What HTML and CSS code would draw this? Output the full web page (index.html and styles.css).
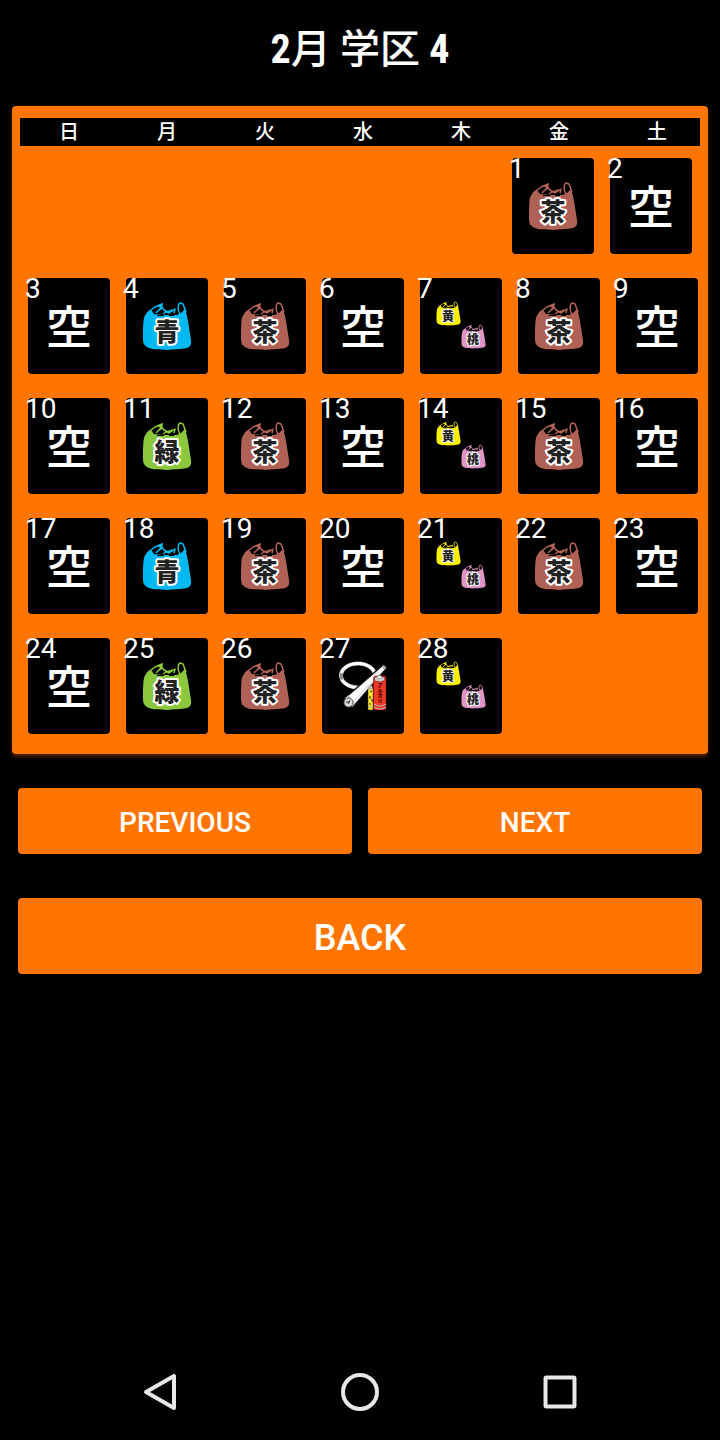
FILE: index.html
```html
<!DOCTYPE html>
<html lang="ja">
<head>
<meta charset="utf-8">
<meta name="viewport" content="width=device-width, initial-scale=1">
<title>2月 学区 4</title>
<link rel="stylesheet" href="styles.css">
</head>
<body>
<svg class="defs" aria-hidden="true">
  <symbol id="bag" viewBox="0 0 50 50">
    <path fill="currentColor" d="M1 38C1 30 1 22 2 17C3 13 6 10 9 9L12 13L22 14L35 14L39 12L43 8L44 11L46 20L49 39C50 45 47 47 42 47.500C37 48.500 31 48 25 49C18 48 11 49 7 47C2 45 1 42 1 38Z"/>
    <path fill="none" stroke="currentColor" stroke-width="1.500" stroke-linejoin="round" d="M5 12L13 6L20 3L18 8L14 12M19 5L22 9L27 12L33 8L32 12M21 13L24 11L31 9M38 13C35 9 36 3 38 2L41 3L44 11"/>
    <path fill="currentColor" d="M15 6L21 2L20 8L17 10L18 6Z"/>
    <path fill="none" stroke="#000" d="M15 14.500H22M27 14.500H32"/>
  </symbol>
</svg>
<header class="title-bar"><h1>2<span class="kanji">月 学区</span> 4</h1></header>
<main>
  <table class="calendar">
    <thead>
      <tr><th>日</th><th>月</th><th>火</th><th>水</th><th>木</th><th>金</th><th>土</th></tr>
    </thead>
    <tbody>
      <tr>
        <td class="blank"></td><td class="blank"></td><td class="blank"></td><td class="blank"></td><td class="blank"></td>
        <td><button class="day"><span class="num">1</span><svg class="icon brown" viewBox="0 0 50 50"><use href="#bag"/><text x="25" y="40">茶</text></svg></button></td>
        <td><button class="day"><span class="num">2</span><span class="none">空</span></button></td>
      </tr>
      <tr>
        <td><button class="day"><span class="num">3</span><span class="none">空</span></button></td>
        <td><button class="day"><span class="num">4</span><svg class="icon blue" viewBox="0 0 50 50"><use href="#bag"/><text x="25" y="40">青</text></svg></button></td>
        <td><button class="day"><span class="num">5</span><svg class="icon brown" viewBox="0 0 50 50"><use href="#bag"/><text x="25" y="40">茶</text></svg></button></td>
        <td><button class="day"><span class="num">6</span><span class="none">空</span></button></td>
        <td><button class="day"><span class="num">7</span><svg class="icon pair" viewBox="0 0 50 50"><use class="yellow" href="#bag" width="25" height="25"/><use class="pink" href="#bag" x="25" y="23" width="25" height="25"/><text x="12" y="20">黄</text><text x="37" y="43">桃</text></svg></button></td>
        <td><button class="day"><span class="num">8</span><svg class="icon brown" viewBox="0 0 50 50"><use href="#bag"/><text x="25" y="40">茶</text></svg></button></td>
        <td><button class="day"><span class="num">9</span><span class="none">空</span></button></td>
      </tr>
      <tr>
        <td><button class="day"><span class="num">10</span><span class="none">空</span></button></td>
        <td><button class="day"><span class="num">11</span><svg class="icon green" viewBox="0 0 50 50"><use href="#bag"/><text x="25" y="40">緑</text></svg></button></td>
        <td><button class="day"><span class="num">12</span><svg class="icon brown" viewBox="0 0 50 50"><use href="#bag"/><text x="25" y="40">茶</text></svg></button></td>
        <td><button class="day"><span class="num">13</span><span class="none">空</span></button></td>
        <td><button class="day"><span class="num">14</span><svg class="icon pair" viewBox="0 0 50 50"><use class="yellow" href="#bag" width="25" height="25"/><use class="pink" href="#bag" x="25" y="23" width="25" height="25"/><text x="12" y="20">黄</text><text x="37" y="43">桃</text></svg></button></td>
        <td><button class="day"><span class="num">15</span><svg class="icon brown" viewBox="0 0 50 50"><use href="#bag"/><text x="25" y="40">茶</text></svg></button></td>
        <td><button class="day"><span class="num">16</span><span class="none">空</span></button></td>
      </tr>
      <tr>
        <td><button class="day"><span class="num">17</span><span class="none">空</span></button></td>
        <td><button class="day"><span class="num">18</span><svg class="icon blue" viewBox="0 0 50 50"><use href="#bag"/><text x="25" y="40">青</text></svg></button></td>
        <td><button class="day"><span class="num">19</span><svg class="icon brown" viewBox="0 0 50 50"><use href="#bag"/><text x="25" y="40">茶</text></svg></button></td>
        <td><button class="day"><span class="num">20</span><span class="none">空</span></button></td>
        <td><button class="day"><span class="num">21</span><svg class="icon pair" viewBox="0 0 50 50"><use class="yellow" href="#bag" width="25" height="25"/><use class="pink" href="#bag" x="25" y="23" width="25" height="25"/><text x="12" y="20">黄</text><text x="37" y="43">桃</text></svg></button></td>
        <td><button class="day"><span class="num">22</span><svg class="icon brown" viewBox="0 0 50 50"><use href="#bag"/><text x="25" y="40">茶</text></svg></button></td>
        <td><button class="day"><span class="num">23</span><span class="none">空</span></button></td>
      </tr>
      <tr>
        <td><button class="day"><span class="num">24</span><span class="none">空</span></button></td>
        <td><button class="day"><span class="num">25</span><svg class="icon green" viewBox="0 0 50 50"><use href="#bag"/><text x="25" y="40">緑</text></svg></button></td>
        <td><button class="day"><span class="num">26</span><svg class="icon brown" viewBox="0 0 50 50"><use href="#bag"/><text x="25" y="40">茶</text></svg></button></td>
        <td><button class="day"><span class="num">27</span><svg class="icon hazard" viewBox="0 0 50 50">
          <ellipse cx="20" cy="14.500" rx="17" ry="12" fill="none" stroke="#aaa" stroke-width="4"/>
          <ellipse cx="20" cy="14.500" rx="17" ry="12" fill="none" stroke="#fff" stroke-width="3"/>
          <path d="M2 12L5 12.500L4.500 19L2 18Z" fill="#888"/>
          <path d="M7 37L45 4L48 8L15 46Z" fill="#fff" stroke="#111" stroke-width="1.500"/>
          <path d="M16 40L36 19" stroke="#ccc" stroke-width="1"/>
          <path d="M44 5L46 4L48.500 7L46 9Z" fill="#aaa"/>
          <path d="M7 37L11 34L17 42L14 46Z" fill="#ccc"/>
          <circle cx="10.500" cy="41.500" r="4.500" fill="#ddd" stroke="#555"/>
          <path d="M8 41H12M10 43L12 39" stroke="#333"/>
          <rect x="30" y="27" width="5" height="22" rx="1" fill="#ffe633" stroke="#4a4200" stroke-width="0.500"/>
          <path d="M31 25H34V28H31ZM30 46H35" stroke="#aaa" fill="#ccc"/>
          <path d="M32 31L34 30M32 35V38M34 38V41M31 43H33" stroke="#222"/>
          <rect x="35.500" y="15" width="12.500" height="34" rx="2" fill="#f23724" stroke="#701208" stroke-width="0.500"/>
          <ellipse cx="41.500" cy="18" rx="5.500" ry="3" fill="#ccc" stroke="#a22"/>
          <ellipse cx="41.500" cy="16" rx="2.500" ry="1.500" fill="#fff" stroke="#555" stroke-width="0.500"/>
          <path d="M36 43Q42 47 48 43M36 46Q42 50 48 46" fill="none" stroke="#bbb"/>
          <text class="vertical" x="42" y="22">アルカリ</text>
        </svg></button></td>
        <td><button class="day"><span class="num">28</span><svg class="icon pair" viewBox="0 0 50 50"><use class="yellow" href="#bag" width="25" height="25"/><use class="pink" href="#bag" x="25" y="23" width="25" height="25"/><text x="12" y="20">黄</text><text x="37" y="43">桃</text></svg></button></td>
        <td class="blank"></td><td class="blank"></td>
      </tr>
    </tbody>
  </table>
  <div class="actions">
    <div class="pager">
      <button class="btn">PREVIOUS</button>
      <button class="btn">NEXT</button>
    </div>
    <button class="btn back">BACK</button>
  </div>
</main>
<nav class="system-nav">
  <button aria-label="Back"><svg viewBox="0 0 40 40"><path d="M34 4V36L6 20Z"/></svg></button>
  <button aria-label="Home"><svg viewBox="0 0 40 40"><circle cx="20" cy="20" r="17"/></svg></button>
  <button aria-label="Recent apps"><svg viewBox="0 0 40 40"><rect x="5.500" y="5.500" width="29" height="29" rx="1"/></svg></button>
</nav>
</body>
</html>
```

FILE: styles.css
```css
:root {
  --orange: #ff7500;
  --tile: 50px;
}

* { box-sizing: border-box; }

body {
  margin: 0;
  min-height: 100vh;
  display: flex;
  flex-direction: column;
  background: #000;
  color: #fff;
  font-family: Roboto, "Noto Sans CJK JP", sans-serif;
}

button {
  border: 0;
  padding: 0;
  color: inherit;
  font: inherit;
  cursor: pointer;
}

.defs { position: absolute; width: 0; height: 0; }

.title-bar { padding: 20px 12px 26px; text-align: center; }

.title-bar h1 {
  margin: 0;
  font-family: "Roboto Condensed", "Liberation Sans Narrow", Roboto, "Noto Sans CJK JP", sans-serif;
  font-size: 40px;
  line-height: 60px;
  font-weight: 700;
}

.title-bar .kanji { font-weight: 500; }

main { flex: 1; padding: 0 12px; }

.calendar {
  display: block;
  padding: 12px 8px 8px;
  background: var(--orange);
  border-radius: 4px;
  box-shadow: 0 3px 4px rgba(255, 117, 0, 0.3);
}

.calendar thead,
.calendar tbody { display: block; }

.calendar thead { background: #000; }

.calendar tr { display: flex; }

.calendar th,
.calendar td {
  flex: 0 0 calc((100% + 6px) / 7);
  min-width: 0;
}

.calendar th {
  padding: 1px 0 0;
  font-size: 20px;
  line-height: 27px;
  font-weight: 500;
}

.calendar td { padding: 12px 8px; }

.calendar td.blank { flex-shrink: 1; padding: 0; }

.day {
  position: relative;
  display: flex;
  align-items: center;
  justify-content: center;
  width: 100%;
  height: 96px;
  background: #000;
  border-radius: 4px;
}

.num {
  position: absolute;
  top: -3px;
  left: -3px;
  font-size: 28px;
  line-height: 28px;
}

.none {
  padding-bottom: 4px;
  font-family: "Noto Sans CJK JP", sans-serif;
  font-size: 46px;
  line-height: 46px;
  font-weight: 500;
}

.icon {
  width: var(--tile);
  height: var(--tile);
  overflow: visible;
}

.icon text {
  font-family: "Noto Sans CJK JP", sans-serif;
  font-size: 25px;
  font-weight: 900;
  text-anchor: middle;
  fill: #222;
  stroke: #fff;
  stroke-width: 4px;
  stroke-linejoin: round;
  paint-order: stroke;
}

.icon.pair text { font-size: 12px; stroke-width: 2px; }

.icon.hazard text {
  font-size: 5px;
  fill: #300;
  stroke: none;
}

.icon .vertical { writing-mode: vertical-rl; text-anchor: start; }

.brown { color: #b06155; }
.blue { color: #00b9f2; }
.green { color: #8cc83c; }
.yellow { color: #fff000; }
.pink { color: #e094c4; }

.actions {
  display: flex;
  flex-direction: column;
  gap: 44px;
  padding: 34px 6px;
}

.pager { display: flex; gap: 16px; }

.btn {
  flex: 1 1 0;
  padding: 19px 12px 15px;
  background: var(--orange);
  border-radius: 4px;
  font-size: 28px;
  line-height: 32px;
  font-weight: 500;
}

.btn.back {
  flex: none;
  padding: 20px 12px 16px;
  font-size: 36px;
  line-height: 40px;
}

.system-nav {
  display: flex;
  height: 96px;
  padding: 0 60px;
}

.system-nav button { flex: 1; background: none; }

.system-nav svg {
  display: block;
  width: 40px;
  height: 40px;
  margin: 0 auto;
  fill: none;
  stroke: #e8e8e8;
  stroke-width: 4;
  stroke-linejoin: round;
}
```
